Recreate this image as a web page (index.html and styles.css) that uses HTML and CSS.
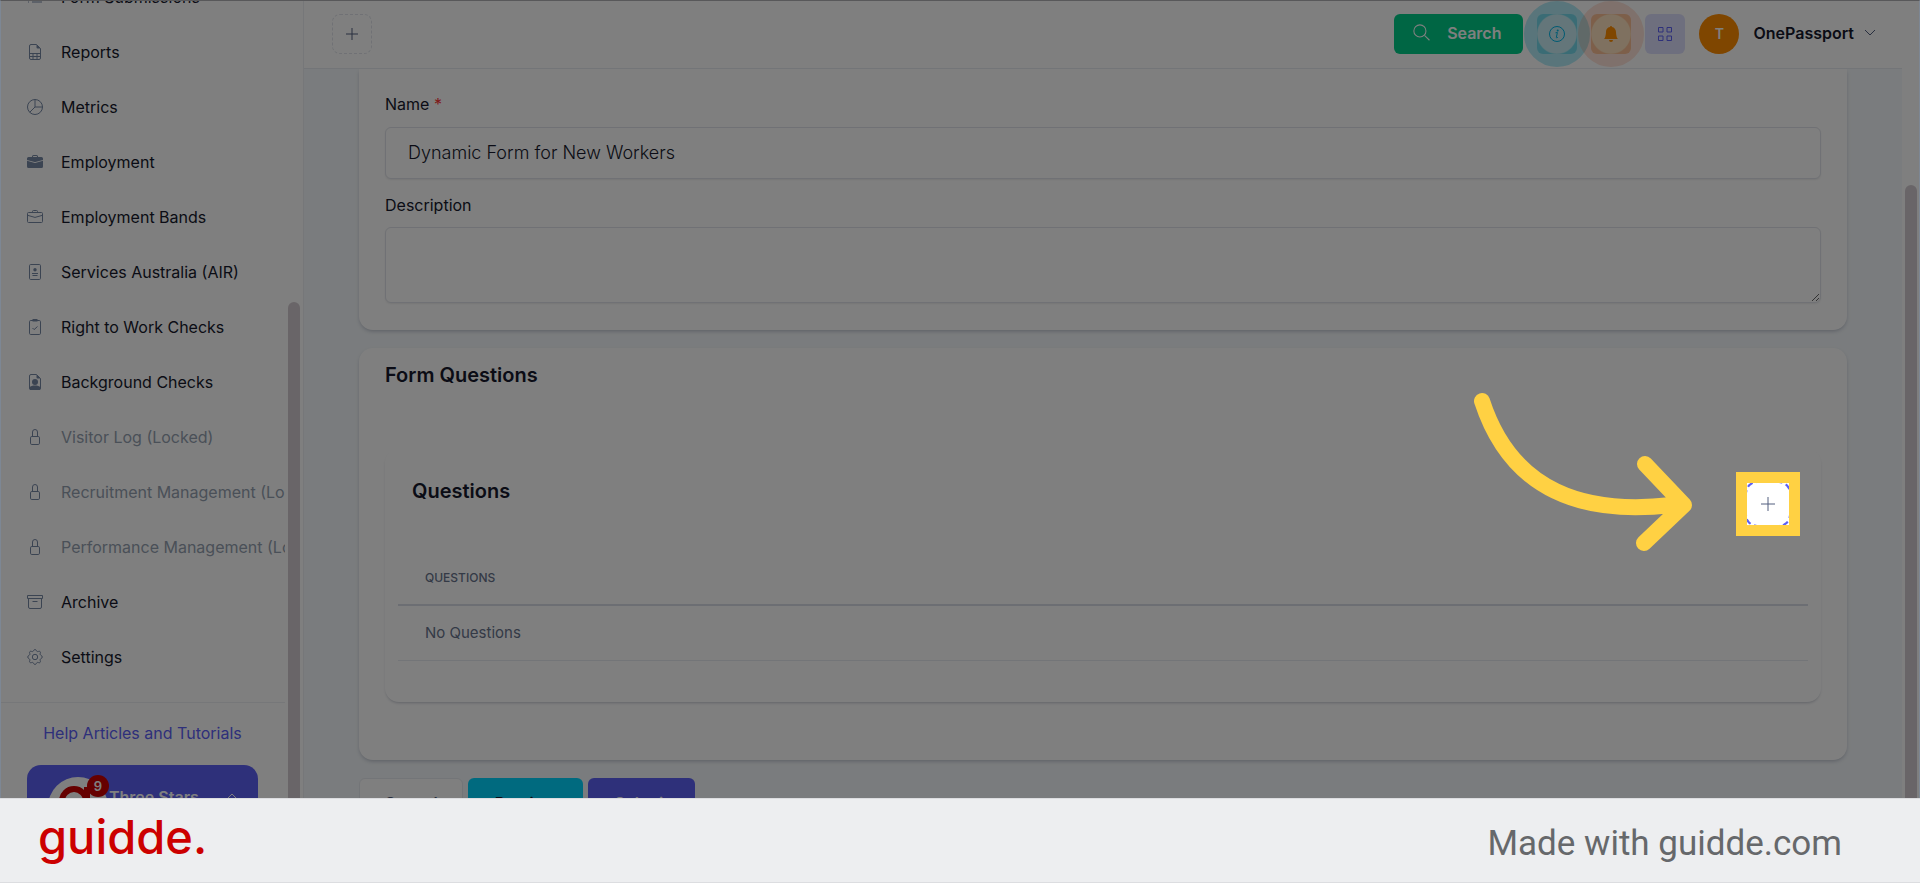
FILE: index.html
```
<!DOCTYPE html>
<html lang="en">
<head>
    <meta charset="UTF-8">
    <meta name="viewport" content="width=device-width, initial-scale=1.0">
    <title>Dynamic Form for New Workers</title>
    <link rel="stylesheet" href="styles.css">
</head>
<body>

    <div class="stage">
        <aside class="sidebar">
            <nav class="menu">
                <a href="#" class="menu-item">
                    <svg viewBox="0 0 16 16"><path d="M5 3h10M5 8h10M5 13h10M1 3h1M1 8h1M1 13h1"/></svg>
                    <span>Form Submissions</span>
                </a>
                <a href="#" class="menu-item">
                    <svg viewBox="0 0 16 16"><path d="M9.5.5H4A1.5 1.5 0 0 0 2.500 2v12A1.500 1.500 0 0 0 4 15.500h8a1.500 1.500 0 0 0 1.500-1.500V4.500zM2.500 9.500h11M2.500 12.500h11M6 9.500v6M10 9.500v6"/><path class="solid" d="M9.500.500v3a1 1 0 0 0 1 1h3z"/></svg>
                    <span>Reports</span>
                </a>
                <a href="#" class="menu-item">
                    <svg viewBox="0 0 16 16"><circle cx="8" cy="8" r="7.500"/><path d="M8 .5V8h7.500M8 8l-5.300 5.300"/></svg>
                    <span>Metrics</span>
                </a>
                <a href="#" class="menu-item">
                    <svg viewBox="0 0 16 16"><path class="solid" d="M6.500 1A1.500 1.500 0 0 0 5 2.500V3H1.500A1.500 1.500 0 0 0 0 4.500v1.384l7.614 2.030a1.500 1.500 0 0 0 .772 0L16 5.884V4.500A1.500 1.500 0 0 0 14.500 3H11v-.5A1.500 1.500 0 0 0 9.500 1zm0 1h3a.5.5 0 0 1 .5.5V3H6v-.5a.5.5 0 0 1 .5-.5"/><path class="solid" d="M0 12.500A1.500 1.500 0 0 0 1.500 14h13a1.500 1.500 0 0 0 1.500-1.500V6.850L8.129 8.947a.5.5 0 0 1-.258 0L0 6.850z"/></svg>
                    <span>Employment</span>
                </a>
                <a href="#" class="menu-item">
                    <svg viewBox="0 0 16 16"><rect x=".5" y="3.500" width="15" height="10" rx="1"/><path d="M5.500 3.500v-1a1 1 0 0 1 1-1h3a1 1 0 0 1 1 1v1M.5 6.300L8 8.400l7.500-2.100"/></svg>
                    <span>Employment Bands</span>
                </a>
                <a href="#" class="menu-item">
                    <svg viewBox="0 0 16 16"><rect x="2.500" y=".5" width="11" height="15" rx="1.200"/><circle class="solid" cx="8" cy="5.700" r="1.700"/><path d="M5 9.500h6M5.500 11.500h5"/></svg>
                    <span>Services Australia (AIR)</span>
                </a>
                <a href="#" class="menu-item">
                    <svg viewBox="0 0 16 16"><rect x="2.500" y="1.500" width="11" height="14" rx="1.200"/><path d="M5.500 9l1.600 1.600L10.500 7.500"/><path class="solid" d="M5.500 0h5v2.500h-5z"/></svg>
                    <span>Right to Work Checks</span>
                </a>
                <a href="#" class="menu-item">
                    <svg viewBox="0 0 16 16"><path d="M9.500.5H4A1.500 1.500 0 0 0 2.500 2v12A1.500 1.500 0 0 0 4 15.500h8a1.500 1.500 0 0 0 1.500-1.500V4.500z"/><path class="solid" d="M9.500.5v3a1 1 0 0 0 1 1h3zM2.500 13.500c1-1.500 3-2 5.500-2s4.500.5 5.500 2V15a1 1 0 0 1-1 1h-9a1 1 0 0 1-1-1z"/><circle class="solid" cx="8" cy="8" r="3"/></svg>
                    <span>Background Checks</span>
                </a>
                <a href="#" class="menu-item locked">
                    <svg viewBox="0 0 16 16"><rect x="3.500" y="7.500" width="9" height="8" rx="1.300"/><path d="M5.500 7.500V3a2.500 2.500 0 0 1 5 0v4.500"/></svg>
                    <span>Visitor Log (Locked)</span>
                </a>
                <a href="#" class="menu-item locked">
                    <svg viewBox="0 0 16 16"><rect x="3.500" y="7.500" width="9" height="8" rx="1.300"/><path d="M5.500 7.500V3a2.500 2.500 0 0 1 5 0v4.500"/></svg>
                    <span>Recruitment Management (Locked)</span>
                </a>
                <a href="#" class="menu-item locked">
                    <svg viewBox="0 0 16 16"><rect x="3.500" y="7.500" width="9" height="8" rx="1.300"/><path d="M5.500 7.500V3a2.500 2.500 0 0 1 5 0v4.500"/></svg>
                    <span>Performance Management (Locked)</span>
                </a>
                <a href="#" class="menu-item">
                    <svg viewBox="0 0 16 16"><path d="M.5 1.500h15v3H.5zM1.500 4.500V13A1.500 1.500 0 0 0 3 14.500h10a1.500 1.500 0 0 0 1.500-1.500V4.500M5.500 7.500h5"/></svg>
                    <span>Archive</span>
                </a>
                <a href="#" class="menu-item">
                    <svg viewBox="0 0 16 16"><circle cx="8" cy="8" r="2.700"/><path d="M6.700 1.500c.4-1.300 2.200-1.300 2.600 0 .3 1 1.300 1.400 2.200.9 1.200-.6 2.500.6 1.800 1.800-.5.900 0 1.900.9 2.200 1.300.4 1.300 2.800 0 3.200-1 .3-1.400 1.300-.9 2.200.6 1.200-.6 2.500-1.800 1.800-.9-.5-1.900 0-2.200.9-.4 1.300-2.200 1.300-2.600 0-.3-1-1.300-1.400-2.200-.9-1.200.6-2.500-.6-1.800-1.800.5-.9 0-1.900-.9-2.200-1.300-.4-1.300-2.800 0-3.200 1-.3 1.400-1.300.9-2.200-.6-1.200.6-2.500 1.800-1.800.9.500 1.900 0 2.200-.9z"/></svg>
                    <span>Settings</span>
                </a>
            </nav>
            <div class="sidebar-bottom">
                <a href="#" class="help-link">Help Articles and Tutorials</a>
                <button class="user-card">
                    <span class="user-logo">
                        <svg viewBox="0 0 60 60"><circle cx="26" cy="24" r="12"/><path d="M39 10v30"/></svg>
                        <span class="user-count">9</span>
                    </span>
                    <span class="user-name">Three Stars</span>
                    <svg class="caret" viewBox="0 0 12 12"><path d="M1 8l5-5 5 5"/></svg>
                </button>
            </div>
            <div class="scroll-thumb side-thumb"></div>
        </aside>

        <div class="page">
            <header class="topbar">
                <button class="add-btn" aria-label="Add"><svg viewBox="0 0 16 16"><path d="M8 2v12M2 8h12"/></svg></button>
                <div class="topbar-right">
                    <button class="search-btn">
                        <svg viewBox="0 0 16 16"><circle cx="6.500" cy="6.500" r="5.700"/><path d="M10.800 10.800l4.700 4.500"/></svg>
                        Search
                    </button>
                    <button class="icon-btn info" aria-label="Information"><svg viewBox="0 0 16 16"><circle cx="8" cy="8" r="7.500"/><path d="M6.500 6.800l1.900-.3L7.300 11.500q0 .7 1.500-.1"/><circle class="solid" cx="8.700" cy="4.500" r="1"/></svg></button>
                    <button class="icon-btn bell" aria-label="Notifications"><svg viewBox="0 0 16 16"><path class="solid" d="M8 16a2 2 0 0 0 2-2H6a2 2 0 0 0 2 2m.995-14.901a1 1 0 1 0-1.990 0A5 5 0 0 0 3 6c0 1.098-.5 6-2 7h14c-1.500-1-2-5.902-2-7 0-2.420-1.720-4.440-4.005-4.901"/></svg></button>
                    <button class="icon-btn apps" aria-label="Apps"><svg viewBox="0 0 16 16"><path d="M1.500 1.500h4.500v4.500h-4.500zM10 1.500h4.500v4.500h-4.500zM1.500 10h4.500v4.500h-4.500zM10 10h4.500v4.500h-4.500z"/></svg></button>
                    <span class="avatar">T</span>
                    <button class="account">OnePassport <svg class="caret" viewBox="0 0 12 12"><path d="M1 3l5 5 5-5"/></svg></button>
                </div>
            </header>

            <main class="content">
                <section class="card details">
                    <label for="name">Name <span class="required">*</span></label>
                    <input type="text" id="name" value="Dynamic Form for New Workers">
                    <label for="description">Description</label>
                    <textarea id="description"></textarea>
                </section>

                <section class="card questions">
                    <h2>Form Questions</h2>
                    <div class="card inner">
                        <div class="inner-head">
                            <h2>Questions</h2>
                            <button class="add-btn add-question" aria-label="Add question"><svg viewBox="0 0 16 16"><path d="M8 1v14M1 8h14"/></svg></button>
                        </div>
                        <table>
                            <thead><tr><th>QUESTIONS</th></tr></thead>
                            <tbody><tr><td>No Questions</td></tr></tbody>
                        </table>
                    </div>
                </section>

                <div class="actions">
                    <button class="btn cancel">Cancel</button>
                    <button class="btn preview">Preview</button>
                    <button class="btn submit">Submit</button>
                </div>
            </main>
            <div class="scroll-track"><div class="scroll-thumb page-thumb"></div></div>
        </div>

        <!-- Dimmed layer with the highlighted button and arrow -->
        <div class="spotlight"></div>
        <svg class="arrow" viewBox="0 0 230 170"><path d="M16 16C46 108 120 130 206 120M179 79L218 120L178 158"/></svg>
    </div>

    <footer class="brand-bar">
        <span class="brand">guidde.</span>
        <span class="made-with">Made with guidde.com</span>
    </footer>

</body>
</html>
```
FILE: styles.css
```
*, *::after {
    box-sizing: border-box;
}

body {
    margin: 0;
    height: 100vh;
    display: flex;
    flex-direction: column;
    overflow: hidden;
    font-family: Inter, "Liberation Sans", sans-serif;
    font-size: 16px;
    color: #16192c;
}

button, input, textarea {
    font: inherit;
    color: inherit;
}

button {
    border: none;
    padding: 0;
    cursor: pointer;
}

a {
    text-decoration: none;
}

svg {
    width: 16px;
    height: 16px;
    flex-shrink: 0;
    fill: none;
    stroke: currentColor;
    stroke-width: 1;
}

svg .solid {
    fill: currentColor;
    stroke: none;
}

.stage {
    position: relative;
    flex: 1;
    min-height: 0;
    display: flex;
    overflow: hidden;
    background: #fff;
    border-top: 1px solid #58585a;
    border-left: 1px solid #7d8794;
    border-right: 1px solid #7d8794;
}

/* Sidebar */
.sidebar {
    position: relative;
    width: 303px;
    flex-shrink: 0;
    padding-right: 18px;
    overflow: hidden;
    border-right: 1px solid #eceef3;
}

.menu {
    margin-top: -32px;
    padding-bottom: 18px;
}

.menu-item {
    display: flex;
    align-items: center;
    gap: 18px;
    height: 55px;
    padding-left: 26px;
    color: #16192c;
    white-space: nowrap;
    overflow: hidden;
}

.menu-item svg {
    color: #7688a5;
}

.menu-item.locked {
    color: #94a1b0;
}

.sidebar-bottom {
    border-top: 1px solid #eceef3;
    padding: 19px 27px 0 26px;
}

.help-link {
    display: block;
    text-align: center;
    line-height: 22px;
    margin-bottom: 21px;
    color: #5c60f5;
    white-space: nowrap;
}

.user-card {
    display: flex;
    align-items: center;
    width: 100%;
    height: 64px;
    padding: 0 20px 0 19px;
    border-radius: 14px;
    background: #5c60f5;
    color: #fff;
    font-weight: 600;
}

.user-logo {
    position: relative;
    width: 63px;
    height: 40px;
}

.user-logo > svg {
    width: 60px;
    height: 60px;
    border-radius: 50%;
    background: #fff;
    color: #c00;
    stroke-width: 6;
}

.user-count {
    position: absolute;
    top: -2px;
    right: 0;
    width: 22px;
    height: 22px;
    border-radius: 50%;
    background: #c00;
    font-size: 13px;
    line-height: 22px;
}

.user-name {
    flex: 1;
    text-align: left;
}

.caret {
    width: 12px;
    height: 12px;
}

.scroll-thumb {
    border-radius: 6px;
    background: #d2cbd0;
}

.side-thumb {
    position: absolute;
    top: 301px;
    right: 3px;
    bottom: -10px;
    width: 12px;
}

/* Top bar */
.page {
    position: relative;
    flex: 1;
    min-width: 0;
    display: flex;
    flex-direction: column;
    background: #f5f9fc;
}

.topbar {
    display: flex;
    justify-content: space-between;
    align-items: center;
    height: 68px;
    flex-shrink: 0;
    margin-right: 17px;
    padding: 0 26px 2px 28px;
    background: #fff;
    border-bottom: 1px solid #e7eaf0;
}

.add-btn {
    display: flex;
    align-items: center;
    justify-content: center;
    width: 40px;
    height: 40px;
    background: #fff;
    border: 1px dashed #e0e3ea;
    border-radius: 8px;
    color: #525f7f;
}

.topbar-right {
    display: flex;
    align-items: center;
    gap: 14px;
}

.search-btn {
    display: flex;
    align-items: center;
    gap: 17px;
    height: 40px;
    padding: 0 22px 2px 19px;
    border-radius: 6px;
    background: #00cc88;
    color: #fff;
    font-weight: 600;
}

.search-btn svg {
    width: 17px;
    height: 17px;
}

.icon-btn {
    display: flex;
    align-items: center;
    justify-content: center;
    width: 40px;
    height: 40px;
    border-radius: 6px;
}

.info {
    background: radial-gradient(circle, #c8edf4 19px, #a8e6f0 20px);
    color: #00b4e6;
}

.bell {
    background: radial-gradient(circle, #ffe3c0 19px, #fad2aa 20px);
    color: #ff8c00;
}

.apps {
    background: #dddffd;
    color: #5c60f5;
}

.info, .bell {
    position: relative;
}

/* Pulse rings around the buttons */
.info::after, .bell::after {
    content: "";
    position: absolute;
    left: 50%;
    top: 50%;
    width: 66px;
    height: 66px;
    transform: translate(-50%, -50%);
    border: 13px solid rgba(0, 190, 225, 0.3);
    border-radius: 50%;
}

.bell::after {
    border-color: rgba(255, 110, 60, 0.2);
}

.avatar {
    width: 40px;
    height: 40px;
    border-radius: 50%;
    background: #ff8c00;
    color: #fff;
    font-size: 14px;
    font-weight: 600;
    line-height: 40px;
    text-align: center;
}

.account {
    display: flex;
    align-items: center;
    gap: 10px;
    padding-bottom: 2px;
    background: none;
    font-weight: 600;
}

.account .caret {
    color: #525f7f;
}

/* Form */
.content {
    flex: 1;
    min-height: 0;
    overflow: hidden;
    padding: 0 72px 0 55px;
}

.card {
    background: #fff;
    border-radius: 14px;
    box-shadow: 0 2px 4px -1px rgba(60, 70, 100, 0.35);
}

.details {
    padding: 24px 26px 27px;
    border-radius: 0 0 14px 14px;
    margin-bottom: 18px;
}

.details label {
    display: block;
    line-height: 22px;
}

.required {
    color: #f33;
}

input, textarea {
    display: block;
    width: 100%;
    border: 1px solid #e0e3ea;
    border-radius: 6px;
    background: #fff;
    box-shadow: 0 1px 2px rgba(0, 0, 0, 0.08);
}

input {
    height: 52px;
    margin: 12px 0 15px;
    padding: 0 22px 1px;
    font-size: 18px;
    font-weight: 300;
}

textarea {
    height: 76px;
    margin-top: 11px;
}

.questions {
    padding: 14px 26px 58px;
}

h2 {
    margin: 0;
    font-size: 20px;
    font-weight: 600;
    line-height: 26px;
}

.inner {
    margin-top: 61px;
    padding: 22px 13px 41px;
    box-shadow: 0 2px 3px -1px rgba(60, 70, 100, 0.3);
}

.inner-head {
    display: flex;
    justify-content: space-between;
    align-items: flex-start;
    padding: 7px 17px 0 14px;
    height: 79px;
}

.add-question {
    width: 46px;
    height: 46px;
    border: 2px dashed #5c60f5;
    border-radius: 12px;
    margin-top: 3px;
}

table {
    width: 100%;
    border-collapse: collapse;
    color: #68748d;
    text-align: left;
}

th {
    height: 55px;
    padding: 0 27px;
    border-bottom: 2px solid #d8dce6;
    font-size: 12px;
    font-weight: 500;
}

td {
    height: 55px;
    padding: 0 27px;
    border-bottom: 1px solid #e7eaf0;
    font-size: 15px;
}

.actions {
    display: flex;
    gap: 5px;
    margin-top: 18px;
}

.btn {
    height: 50px;
    padding: 0 26px;
    border-radius: 6px;
    background: #fff;
    font-weight: 600;
}

.cancel {
    padding: 0 24px;
    border: 1px solid #e7eaf0;
    color: #525f7f;
}

.preview {
    padding: 0 27px;
    background: #00d4ff;
}

.submit {
    background: #5c60f5;
    color: #fff;
}

.scroll-track {
    position: absolute;
    top: 0;
    right: 0;
    bottom: 0;
    width: 17px;
    background: #fff;
}

.page-thumb {
    height: 100%;
    margin: 184px 2px 0 3px;
}

/* Highlight */
.spotlight {
    position: absolute;
    top: 471px;
    right: 119px;
    width: 64px;
    height: 64px;
    border: 11px solid #ffd143;
    box-shadow: 0 0 0 3000px rgba(0, 0, 0, 0.5);
}

.arrow {
    position: absolute;
    top: 384px;
    right: 223px;
    width: 230px;
    height: 170px;
    color: #ffd143;
    stroke-width: 16;
    stroke-linecap: round;
    stroke-linejoin: round;
}

/* Footer */
.brand-bar {
    display: flex;
    justify-content: space-between;
    align-items: center;
    height: 85px;
    flex-shrink: 0;
    padding: 0 78px 0 38px;
    background: #edeef0;
    border-top: 1px solid #dcdde0;
    border-bottom: 1px solid #dcdde0;
}

.brand {
    color: #c00;
    font-size: 47px;
    font-weight: 500;
    line-height: 60px;
    padding-bottom: 8px;
}

.made-with {
    color: #66686b;
    font-family: Roboto, sans-serif;
    font-size: 35px;
    line-height: 44px;
    padding-top: 6px;
}
```
